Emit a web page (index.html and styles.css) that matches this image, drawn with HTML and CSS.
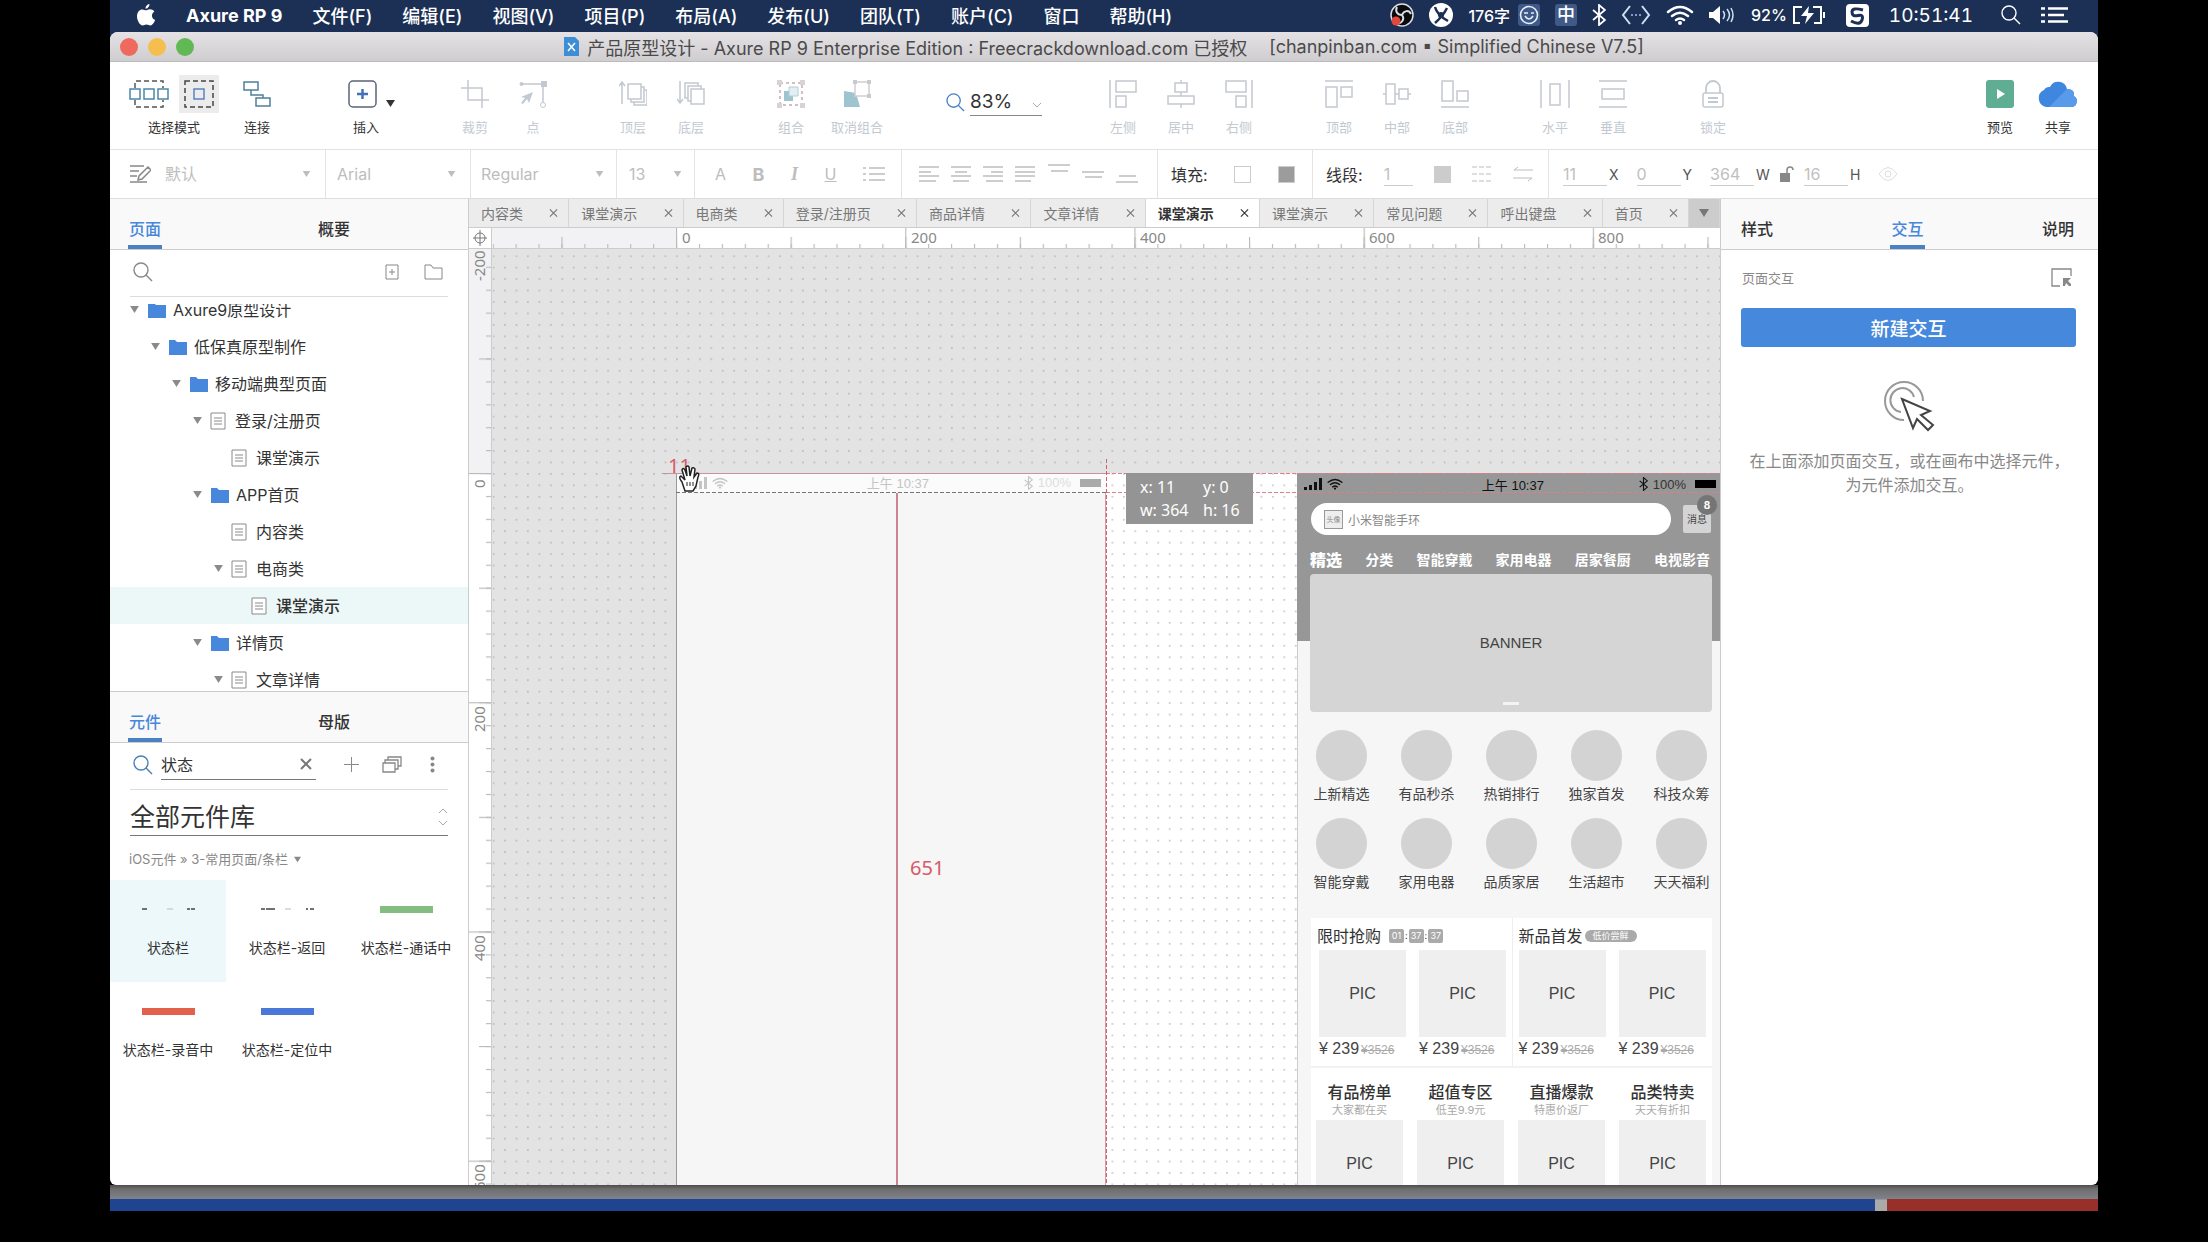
FILE: index.html
```html
<!DOCTYPE html>
<html lang="zh-CN">
<head>
<meta charset="utf-8">
<title>产品原型设计 - Axure RP 9</title>
<link rel="stylesheet" href="styles.css">
</head>
<body>
<svg class="defs" aria-hidden="true">
  <symbol id="i-x" viewBox="0 0 10 10"><path d="M1 1l8 8M9 1l-8 8" fill="none" stroke="currentColor" stroke-width="1.3"/></symbol>
  <symbol id="i-down" viewBox="0 0 10 8"><path d="M0 0h10L5 8z" fill="currentColor"/></symbol>
  <symbol id="i-search" viewBox="0 0 20 20"><g fill="none" stroke="currentColor" stroke-width="1.4"><circle cx="8" cy="8" r="7"/><path d="M13 13l6 6"/></g></symbol>
  <symbol id="i-folder" viewBox="0 0 20 16"><path d="M1 1h6l2 2h10v13H1z" fill="#4787dc"/></symbol>
  <symbol id="i-page" viewBox="0 0 16 18"><path d="M1 1h14v16H1z" fill="#fff" stroke="#8a8a8a"/><path d="M4 6h8M4 9h8M4 12h8" stroke="#8a8a8a" fill="none"/></symbol>
  <symbol id="i-signal" viewBox="0 0 18 12"><path d="M0 9h3v3H0zM5 7h3v5H5zM10 4h3v8h-3zM15 0h3v12h-3z" fill="currentColor"/></symbol>
  <symbol id="i-wifi" viewBox="0 0 28 20"><g fill="none" stroke="currentColor" stroke-width="2.4" stroke-linecap="round"><path d="M2 7q12-10 24 0M6 11q8-6.500 16 0M10 15q4-3 8 0"/></g><circle cx="14" cy="18" r="2" fill="currentColor"/></symbol>
  <symbol id="i-bt" viewBox="0 0 14 22"><path d="M1 6l12 10-6 5V1l6 5L1 16" fill="none" stroke="currentColor" stroke-width="1.8"/></symbol>
</svg>

<div class="screen">
  <header class="menubar">
    <nav class="menus">
      <button class="apple" aria-label="Apple"><svg width="20" height="22" viewBox="0 0 20 22"><path d="M13.500 0c.2 2-1.600 4.600-3.900 4.700C9.300 2.600 11.300.3 13.500 0zM10 6.300c1 0 2.200-1.100 4-1.100 1.600 0 3.300.8 4.400 2.400-3.600 2.100-3 7.100.7 8.500-.9 2.500-2.700 5.400-4.700 5.400-1.500 0-2-.9-3.900-.9s-2.500.9-3.900.9C3.900 21.500 1 16.600 1 12.300c0-4.400 2.700-6.900 5.300-6.900 1.700 0 2.700.9 3.700.9z" fill="#fff"/></svg></button>
      <button class="app">Axure RP 9</button>
      <button>文件(F)</button><button>编辑(E)</button><button>视图(V)</button><button>项目(P)</button><button>布局(A)</button><button>发布(U)</button><button>团队(T)</button><button>账户(C)</button><button>窗口</button><button>帮助(H)</button>
    </nav>
    <div class="status">
      <svg width="24" height="26" viewBox="0 0 24 24"><circle cx="12" cy="12" r="11" fill="#0b0b0d" stroke="#d9dde6" stroke-width="1.500"/><path d="M12 12C7 12 5 8 7 4M12 12c2-5 7-5 9-1M12 12c3 4 0 8-4 9" fill="none" stroke="#d9dde6" stroke-width="2"/><circle cx="6" cy="18" r="4.500" fill="#e2483c"/></svg>
      <svg width="24" height="24" viewBox="0 0 24 24"><circle cx="12" cy="12" r="12" fill="#fff"/><path d="M6 4q2 8 13 14M18 5q-4 8-12 15" fill="none" stroke="#1c3056" stroke-width="2.500"/><circle cx="12" cy="12" r="3" fill="#1c3056"/></svg>
      <span class="pair"><span class="s16">176字</span><svg class="ime" width="22" height="22" viewBox="0 0 22 22"><g fill="none" stroke="#e6eefa" stroke-width="1.600"><circle cx="11" cy="11" r="8.500"/><path d="M7 12q4 6 8 0M6 9h4M13 9h3"/></g></svg></span>
      <span class="ime zh">中</span>
      <svg width="14" height="22"><use href="#i-bt"/></svg>
      <svg width="30" height="22" viewBox="0 0 30 22"><path d="M9 2L2 11l7 9M21 2l7 9-7 9" fill="none" stroke="#cfe0f5" stroke-width="2"/><path d="M10 11h10" stroke="#7f9cc4" stroke-width="2" stroke-dasharray="2 2"/></svg>
      <svg width="28" height="20"><use href="#i-wifi"/></svg>
      <svg width="25" height="18" viewBox="0 0 25 18"><path d="M0 6h4l7-6v18l-7-6H0z" fill="#fff"/><path d="M14 5q3 4 0 8M18 3q5 6 0 12M22 2q4 7 0 14" fill="none" stroke="#cfe0f5" stroke-width="1.500"/></svg>
      <div class="clockside">
        <span class="pair tight"><span class="s16">92%</span><svg width="34" height="18" viewBox="0 0 34 18"><path d="M10 1H2v16h6M21 1h8v16h-7M32 6v6" fill="none" stroke="#fff" stroke-width="2"/><path d="M17 0l-8 10h6l-2 8 9-11h-6z" fill="#fff"/></svg></span>
        <svg width="23" height="23" viewBox="0 0 23 23"><rect width="23" height="23" rx="4" fill="#fff"/><path d="M17 6Q6 3 6 8t6 3.500 4 4.500-11 1" fill="none" stroke="#1c3056" stroke-width="3"/></svg>
        <time>10:51:41</time>
        <svg class="spot" width="20" height="20"><use href="#i-search"/></svg>
        <svg width="27" height="16" viewBox="0 0 27 16"><path d="M0 1.500h4M7 1.500h20M0 8h4M7 8h16M0 14.500h4M7 14.500h20" stroke="#fff" stroke-width="2.500"/></svg>
      </div>
    </div>
  </header>

  <main class="window">
    <div class="titlebar">
      <div class="lights"><i class="red"></i><i class="yellow"></i><i class="green"></i></div>
      <svg width="15" height="19" viewBox="0 0 15 19"><path d="M0 0h11l4 4v15H0z" fill="#3e8ed6"/><path d="M4 6l7 8M11 6l-7 8" stroke="#fff" stroke-width="1.500"/></svg>
      <span>产品原型设计 - Axure RP 9 Enterprise Edition : Freecrackdownload.com 已授权</span>
      <span class="edition">[chanpinban.com ▪ Simplified Chinese V7.5]</span>
    </div>

    <div class="toolbar">
      <div class="group lead">
        <button class="tool wide"><span class="icons"><svg width="40" height="28" viewBox="0 0 40 28"><path d="M6 8V1h28v7M6 20v7h28v-7" fill="none" stroke="#555" stroke-width="1.500" stroke-dasharray="5 3"/><g fill="#fff" stroke="#4a86a8" stroke-width="1.500"><path d="M1 9h10v10H1zM15 9h10v10H15zM29 9h10v10H29z"/></g></svg><span class="picked"><svg width="30" height="28" viewBox="0 0 30 28"><path d="M1 1h28v26H1z" fill="none" stroke="#444" stroke-width="1.500" stroke-dasharray="5 3"/><path d="M10 9h10v10H10z" fill="none" stroke="#5b84c4" stroke-width="1.500"/></svg></span></span>选择模式</button>
        <button class="tool"><span class="icons"><svg width="28" height="28" viewBox="0 0 28 28"><path d="M1 2h14v8H1zM13 18h14v8H13zM8 10v5h12v3" fill="none" stroke="#4f7f9c" stroke-width="1.500"/></svg></span>连接</button>
      </div>
      <div class="group">
        <button class="tool insert"><span class="icons"><svg width="48" height="28" viewBox="0 0 48 28"><rect x="1" y="1" width="27" height="26" rx="4" fill="none" stroke="#5a6478" stroke-width="1.500"/><path d="M14.500 9v10M9 14h11" stroke="#4470b8" stroke-width="2.500"/><path d="M38 20h9l-4.500 7z" fill="#333"/></svg></span>插入</button>
      </div>
      <div class="group">
        <button class="tool off"><span class="icons"><svg width="28" height="28" viewBox="0 0 28 28"><path d="M0 8h21v20M7 0v20h21" fill="none" stroke="currentColor" stroke-width="1.500"/></svg></span>裁剪</button>
        <button class="tool off"><span class="icons"><svg width="28" height="28" viewBox="0 0 28 28"><path d="M2 4h22v20" fill="none" stroke="currentColor" stroke-width="1.500"/><circle cx="2.500" cy="4" r="2" fill="currentColor"/><path d="M22 1h6v6h-6z" fill="currentColor"/><circle cx="24" cy="25" r="2.500" fill="#fff" stroke="currentColor"/><path d="M14 12L2 17l4 1-4 5 2 1 4-5 2 4z" fill="currentColor"/></svg></span>点</button>
      </div>
      <div class="group">
        <button class="tool off"><span class="icons"><svg width="28" height="28" viewBox="0 0 28 28"><path d="M3 24V3M0 6l3-4 3 4M9 4h13v15H9zM22 7h3v15H12v-3M25 10h3v15H15v-3" fill="none" stroke="currentColor" stroke-width="1.500"/></svg></span>顶层</button>
        <button class="tool off"><span class="icons"><svg width="28" height="28" viewBox="0 0 28 28"><path d="M3 1v21M0 19l3 4 3-4M14 9h13v15H14zM14 21h-3V6h13v3M11 18H8V3h13v3" fill="none" stroke="currentColor" stroke-width="1.500"/></svg></span>底层</button>
      </div>
      <div class="group">
        <button class="tool off"><span class="icons"><svg width="28" height="28" viewBox="0 0 28 28"><path d="M3 3h22v22H3z" fill="none" stroke="#c5a9b4" stroke-width="1.500" stroke-dasharray="3 3"/><path d="M0 0h5v5H0zM23 0h5v5h-5zM0 23h5v5H0zM23 23h5v5h-5z" fill="#d6d3d8"/><path d="M7 11h9v10H7z" fill="#9ec4d0"/><path d="M12 7h9v9h-9z" fill="#e3eff3" stroke="#b5cdd6"/></svg></span>组合</button>
        <button class="tool off ungroup"><span class="icons"><svg width="28" height="28" viewBox="0 0 28 28"><path d="M1 11l12 2 4 14H1z" fill="#9ec4d0"/><path d="M12 2h14v14H12z" fill="#fff" stroke="#cfcfd4" stroke-width="1.500"/><path d="M10 0h4v4h-4zM24 0h4v4h-4zM24 14h4v4h-4z" fill="#c9c9ce"/></svg></span>取消组合</button>
      </div>
      <label class="zoom"><svg width="19" height="19"><use href="#i-search"/></svg><select aria-label="缩放"><option>83%</option></select><svg class="chev" width="10" height="6" viewBox="0 0 10 6"><path d="M1 1l4 4 4-4" fill="none" stroke="#aaa"/></svg></label>
      <div class="group">
        <button class="tool off"><span class="icons"><svg width="28" height="28" viewBox="0 0 28 28"><path d="M1 0v28M7 1h20v11H7zM7 16h10v11H7z" fill="none" stroke="currentColor" stroke-width="1.500"/></svg></span>左侧</button>
        <button class="tool off"><span class="icons"><svg width="28" height="28" viewBox="0 0 28 28"><path d="M14 0v3M8 3h12v9H8zM14 12v4M1 16h26v8H1zM14 24v4" fill="none" stroke="currentColor" stroke-width="1.500"/></svg></span>居中</button>
        <button class="tool off"><span class="icons"><svg width="28" height="28" viewBox="0 0 28 28"><path d="M27 0v28M1 1h20v11H1zM11 16h10v11H11z" fill="none" stroke="currentColor" stroke-width="1.500"/></svg></span>右侧</button>
      </div>
      <div class="group">
        <button class="tool off"><span class="icons"><svg width="28" height="28" viewBox="0 0 28 28"><path d="M0 1h28M1 7h11v20H1zM16 7h11v10H16z" fill="none" stroke="currentColor" stroke-width="1.500"/></svg></span>顶部</button>
        <button class="tool off"><span class="icons"><svg width="28" height="28" viewBox="0 0 28 28"><path d="M0 14h3M3 4h9v20H3zM12 14h4M16 9h9v10h-9zM25 14h3" fill="none" stroke="currentColor" stroke-width="1.500"/></svg></span>中部</button>
        <button class="tool off"><span class="icons"><svg width="28" height="28" viewBox="0 0 28 28"><path d="M0 27h28M1 1h11v20H1zM16 11h11v10H16z" fill="none" stroke="currentColor" stroke-width="1.500"/></svg></span>底部</button>
      </div>
      <div class="group">
        <button class="tool off"><span class="icons"><svg width="30" height="28" viewBox="0 0 30 28"><path d="M1 0v28M29 0v28M10 4h10v21H10z" fill="none" stroke="currentColor" stroke-width="1.500"/></svg></span>水平</button>
        <button class="tool off"><span class="icons"><svg width="28" height="28" viewBox="0 0 28 28"><path d="M0 1h28M0 27h28M3 9h22v10H3z" fill="none" stroke="currentColor" stroke-width="1.500"/></svg></span>垂直</button>
      </div>
      <div class="group">
        <button class="tool off"><span class="icons"><svg width="24" height="28" viewBox="0 0 24 28"><path d="M5 13V8a7 7 0 0 1 14 0v5M7 18h10M7 22h10" fill="none" stroke="currentColor" stroke-width="1.800"/><rect x="2" y="13" width="20" height="14" rx="2" fill="none" stroke="currentColor" stroke-width="1.500"/></svg></span>锁定</button>
      </div>
      <div class="group end">
        <button class="tool"><span class="icons"><svg width="28" height="28" viewBox="0 0 28 28"><rect width="28" height="28" rx="3" fill="#5fae93"/><path d="M11 9l8 5-8 5z" fill="#fff"/></svg></span>预览</button>
        <button class="tool"><span class="icons"><svg width="42" height="28" viewBox="0 0 42 28"><path d="M9 27a9 9 0 0 1-2-17 6 6 0 0 1 6-3 9 9 0 0 1 17 2q8 0 7 7a6 6 0 0 1-2 11z" fill="#3f86de"/><path d="M12 27L30 9q8 0 7 7a6 6 0 0 1-2 11z" fill="#5a9aea"/></svg></span>共享</button>
      </div>
    </div>

    <div class="format">
      <div class="cell f-style"><svg width="21" height="18" viewBox="0 0 21 18"><path d="M0 1h14M0 6h9M0 11h7M0 17h17M18 2l3 3-9 9-4 1 1-4z" fill="none" stroke="#888" stroke-width="1.500"/></svg><select aria-label="样式"><option>默认</option></select><svg width="9" height="6"><use href="#i-down"/></svg></div>
      <div class="cell f-font"><select aria-label="字体"><option>Arial</option></select><svg width="9" height="6"><use href="#i-down"/></svg></div>
      <div class="cell f-weight"><select aria-label="字重"><option>Regular</option></select><svg width="9" height="6"><use href="#i-down"/></svg></div>
      <div class="cell f-size"><select aria-label="字号"><option>13</option></select><svg width="9" height="6"><use href="#i-down"/></svg></div>
      <div class="cell f-text"><button aria-label="颜色">A</button><button class="b">B</button><button class="it">I</button><button class="un">U</button><button aria-label="列表"><svg width="22" height="16" viewBox="0 0 22 16"><path d="M0 2h3M6 2h16M0 8h3M6 8h16M0 14h3M6 14h16" stroke="currentColor" stroke-width="1.500"/></svg></button></div>
      <div class="cell f-align">
        <button aria-label="左对齐"><svg width="20" height="16" viewBox="0 0 20 16"><path d="M0 1h20M0 6h12M0 10h20M0 15h17" stroke="currentColor" stroke-width="1.500"/></svg></button>
        <button aria-label="居中"><svg width="20" height="16" viewBox="0 0 20 16"><path d="M0 1h20M4 6h12M0 10h20M2 15h16" stroke="currentColor" stroke-width="1.500"/></svg></button>
        <button aria-label="右对齐"><svg width="20" height="16" viewBox="0 0 20 16"><path d="M0 1h20M8 6h12M0 10h20M3 15h17" stroke="currentColor" stroke-width="1.500"/></svg></button>
        <button aria-label="两端对齐"><svg width="20" height="16" viewBox="0 0 20 16"><path d="M0 1h20M0 6h20M0 10h20M0 15h16" stroke="currentColor" stroke-width="1.500"/></svg></button>
        <button aria-label="顶部"><svg width="22" height="20" viewBox="0 0 22 20"><path d="M0 1h22M3 7h17" stroke="currentColor" stroke-width="1.500"/></svg></button>
        <button aria-label="中部"><svg width="22" height="20" viewBox="0 0 22 20"><path d="M0 8h22M3 13h17" stroke="currentColor" stroke-width="1.500"/></svg></button>
        <button aria-label="底部"><svg width="22" height="20" viewBox="0 0 22 20"><path d="M3 12h17M0 18h22" stroke="currentColor" stroke-width="1.500"/></svg></button>
      </div>
      <div class="cell f-fill"><span>填充:</span><button class="sw" aria-label="填充颜色"></button><button class="sw solid" aria-label="阴影"></button></div>
      <div class="cell f-line"><label for="lw">线段:</label><input id="lw" class="n" value="1"><button class="sw grey" aria-label="线条颜色"></button><button aria-label="线型"><svg width="20" height="16" viewBox="0 0 20 16"><path d="M0 1h20M0 8h20M0 15h20" stroke="currentColor" stroke-dasharray="5 2"/></svg></button><button aria-label="箭头"><svg width="20" height="16" viewBox="0 0 20 16"><path d="M20 4H1l4-3M0 12h19l-4 3" fill="none" stroke="currentColor"/></svg></button></div>
      <div class="cell f-pos"><label><input value="11">X</label><label><input value="0">Y</label><label><input value="364">W</label><svg width="14" height="16" viewBox="0 0 14 16"><path d="M0 7h10v9H0z" fill="#888"/><path d="M7 7V4q0-3 3-3t3 3" fill="none" stroke="#888" stroke-width="1.500"/></svg><label><input value="16">H</label><svg width="20" height="14" viewBox="0 0 20 14"><path d="M1 7q9-13 18 0-9 13-18 0z" fill="none" stroke="#ddd"/><circle cx="10" cy="7" r="3" fill="none" stroke="#ddd"/></svg></div>
    </div>

    <div class="body">
      <aside class="left">
        <div class="tabs"><button class="on">页面</button><button class="second">概要</button></div>
        <div class="find"><svg width="20" height="20"><use href="#i-search"/></svg><button class="push" aria-label="添加页面"><svg width="14" height="16" viewBox="0 0 14 16"><path d="M1 1h12v14H1zM7 5v6M4 8h6" fill="none" stroke="#888"/></svg></button><button aria-label="添加文件夹"><svg width="19" height="16" viewBox="0 0 19 16"><path d="M1 1h6l2 3h9v11H1z" fill="none" stroke="#888"/></svg></button></div>
        <div class="tree"><ul>
          <li class="d0"><svg class="tw" width="9" height="7"><use href="#i-down"/></svg><svg width="20" height="16"><use href="#i-folder"/></svg><span>Axure9原型设计</span></li>
          <li class="d1"><svg class="tw" width="9" height="7"><use href="#i-down"/></svg><svg width="20" height="16"><use href="#i-folder"/></svg><span>低保真原型制作</span></li>
          <li class="d2"><svg class="tw" width="9" height="7"><use href="#i-down"/></svg><svg width="20" height="16"><use href="#i-folder"/></svg><span>移动端典型页面</span></li>
          <li class="d3"><svg class="tw" width="9" height="7"><use href="#i-down"/></svg><svg class="pg" width="16" height="18"><use href="#i-page"/></svg><span>登录/注册页</span></li>
          <li class="d4"><i class="tw"></i><svg class="pg" width="16" height="18"><use href="#i-page"/></svg><span>课堂演示</span></li>
          <li class="d3"><svg class="tw" width="9" height="7"><use href="#i-down"/></svg><svg width="20" height="16"><use href="#i-folder"/></svg><span>APP首页</span></li>
          <li class="d4"><i class="tw"></i><svg class="pg" width="16" height="18"><use href="#i-page"/></svg><span>内容类</span></li>
          <li class="d4"><svg class="tw" width="9" height="7"><use href="#i-down"/></svg><svg class="pg" width="16" height="18"><use href="#i-page"/></svg><span>电商类</span></li>
          <li class="d5 sel"><i class="tw"></i><svg class="pg" width="16" height="18"><use href="#i-page"/></svg><span>课堂演示</span></li>
          <li class="d3"><svg class="tw" width="9" height="7"><use href="#i-down"/></svg><svg width="20" height="16"><use href="#i-folder"/></svg><span>详情页</span></li>
          <li class="d4"><svg class="tw" width="9" height="7"><use href="#i-down"/></svg><svg class="pg" width="16" height="18"><use href="#i-page"/></svg><span>文章详情</span></li>
        </ul></div>
        <div class="tabs lower"><button class="on">元件</button><button class="second">母版</button></div>
        <div class="find libfind"><svg class="blue" width="20" height="20"><use href="#i-search"/></svg><label class="term"><input aria-label="搜索元件" value="状态"><svg width="12" height="12" viewBox="0 0 12 12"><path d="M1 1l10 10M11 1L1 11" stroke="#777" stroke-width="2"/></svg></label><svg class="plus" width="15" height="15" viewBox="0 0 15 15"><path d="M7.500 0v15M0 7.500h15" stroke="#888"/></svg><svg width="20" height="17" viewBox="0 0 20 17"><path d="M1 7h12v9H1zM3 7V4h13v9h-3M6 4V1h13v9h-3" fill="none" stroke="#888" stroke-width="1.300"/></svg><svg class="dots" width="5" height="17" viewBox="0 0 5 17"><g fill="#888"><circle cx="2.500" cy="2.500" r="2"/><circle cx="2.500" cy="8.500" r="2"/><circle cx="2.500" cy="14.500" r="2"/></g></svg></div>
        <label class="lib"><select aria-label="元件库"><option>全部元件库</option></select><svg width="10" height="18" viewBox="0 0 10 18"><path d="M1 5l4-4 4 4M1 13l4 4 4-4" fill="none" stroke="#aaa"/></svg></label>
        <div class="crumb">iOS元件 » 3-常用页面/条栏 <svg width="7" height="7"><use href="#i-down"/></svg></div>
        <div class="widgets">
          <button class="w on"><svg width="53" height="6" viewBox="0 0 53 6"><path d="M0 3h5M45 3h3M49 3h4" stroke="#444" stroke-width="1.500"/><path d="M25 3h6" stroke="#bbb"/></svg>状态栏</button>
          <button class="w"><svg width="53" height="6" viewBox="0 0 53 6"><path d="M0 3h4M5 3h9M45 3h2M49 3h4" stroke="#444" stroke-width="1.500"/><path d="M24 3h6" stroke="#bbb"/></svg>状态栏-返回</button>
          <button class="w"><i class="bar g"></i>状态栏-通话中</button>
          <button class="w"><i class="bar r"></i>状态栏-录音中</button>
          <button class="w"><i class="bar u"></i>状态栏-定位中</button>
        </div>
      </aside>

      <section class="center">
        <div class="doctabs">
          <button>内容类<svg width="9" height="10"><use href="#i-x"/></svg></button><button>课堂演示<svg width="9" height="10"><use href="#i-x"/></svg></button><button>电商类<svg width="9" height="10"><use href="#i-x"/></svg></button><button>登录/注册页<svg width="9" height="10"><use href="#i-x"/></svg></button><button>商品详情<svg width="9" height="10"><use href="#i-x"/></svg></button><button>文章详情<svg width="9" height="10"><use href="#i-x"/></svg></button><button class="on">课堂演示<svg width="9" height="10"><use href="#i-x"/></svg></button><button>课堂演示<svg width="9" height="10"><use href="#i-x"/></svg></button><button>常见问题<svg width="9" height="10"><use href="#i-x"/></svg></button><button>呼出键盘<svg width="9" height="10"><use href="#i-x"/></svg></button><button>首页<svg width="9" height="10"><use href="#i-x"/></svg></button><button class="more" aria-label="更多"><svg width="10" height="8"><use href="#i-down"/></svg></button>
        </div>
        <div class="work">
          <div class="corner"><svg width="14" height="16" viewBox="0 0 14 16"><circle cx="7" cy="8" r="5" fill="none" stroke="#777"/><path d="M7 0v16M0 8h14" stroke="#777"/></svg></div>
          <svg class="hr" aria-hidden="true">
            <defs>
              <pattern id="h20" width="20" height="21" patternUnits="userSpaceOnUse"><path d="M.5 16v5" stroke="#bbb"/></pattern>
              <pattern id="h100" width="100" height="21" patternUnits="userSpaceOnUse"><path d="M.5 9v12" stroke="#bbb"/></pattern>
              <pattern id="h200" width="200" height="21" patternUnits="userSpaceOnUse"><path d="M.5 0v21" stroke="#bbb"/></pattern>
            </defs>
            <rect width="184" height="21" fill="#f2f2f4"/>
            <g transform="translate(184 0) scale(1.146 1)"><rect x="-160" width="1600" height="21" fill="url(#h20)"/><rect x="-160" width="1600" height="21" fill="url(#h100)"/><rect x="-160" width="1600" height="21" fill="url(#h200)"/></g>
            <g class="rt"><text x="190" y="15">0</text><text x="419" y="15">200</text><text x="648" y="15">400</text><text x="877" y="15">600</text><text x="1106" y="15">800</text></g>
          </svg>
          <svg class="vr" aria-hidden="true">
            <defs>
              <pattern id="v20" width="22" height="20" patternUnits="userSpaceOnUse"><path d="M17 .5h6" stroke="#bbb"/></pattern>
              <pattern id="v100" width="22" height="100" patternUnits="userSpaceOnUse"><path d="M10 .5h12" stroke="#bbb"/></pattern>
              <pattern id="v200" width="22" height="200" patternUnits="userSpaceOnUse"><path d="M0 .5h22" stroke="#bbb"/></pattern>
            </defs>
            <rect width="22" height="224" fill="#f2f2f4"/>
            <g transform="translate(0 224) scale(1 1.146)"><rect y="-195" width="22" height="1600" fill="url(#v20)"/><rect y="-195" width="22" height="1600" fill="url(#v100)"/><rect y="-195" width="22" height="1600" fill="url(#v200)"/></g>
            <g class="rt"><text transform="translate(16 32) rotate(-90)">-200</text><text transform="translate(16 239) rotate(-90)">0</text><text transform="translate(16 483) rotate(-90)">200</text><text transform="translate(16 712) rotate(-90)">400</text><text transform="translate(16 941) rotate(-90)">600</text></g>
          </svg>
          <div class="canvas">
            <svg class="grid" aria-hidden="true">
              <defs>
                <pattern id="dg" width="10" height="10" patternUnits="userSpaceOnUse"><rect x="0" y="0" width="1.500" height="1.500" fill="#bcbcbc"/></pattern>
                <pattern id="dw" width="10" height="10" patternUnits="userSpaceOnUse"><rect x="0" y="0" width="1.500" height="1.500" fill="#d3c4c9"/></pattern>
              </defs>
              <rect width="100%" height="100%" fill="#e3e3e3"/>
              <g transform="translate(184 224) scale(1.146)"><rect x="-160" y="-190" width="1300" height="1100" fill="url(#dg)"/><rect width="1300" height="1100" fill="#fff"/><rect width="1300" height="1100" fill="url(#dw)"/></g>
            </svg>
            <div class="draft"><div class="ghost"><svg width="18" height="12"><use href="#i-signal"/></svg><svg width="16" height="12"><use href="#i-wifi"/></svg><span class="clock">上午 10:37</span><svg width="9" height="14"><use href="#i-bt"/></svg><span class="pct">100%</span><i class="batt"></i></div></div>
            <div class="phone">
              <div class="head">
                <div class="ios"><svg width="18" height="12"><use href="#i-signal"/></svg><svg width="16" height="12"><use href="#i-wifi"/></svg><span class="clock">上午 10:37</span><svg width="9" height="14"><use href="#i-bt"/></svg><span class="pct">100%</span><i class="batt"></i></div>
                <div class="search"><span class="pill"><span class="thumb">头像</span>小米智能手环</span><span class="msg">消息<b>8</b></span></div>
                <div class="cats"><b>精选</b><span>分类</span><span>智能穿戴</span><span>家用电器</span><span>居家餐厨</span><span>电视影音</span></div>
              </div>
              <div class="banner">BANNER</div>
              <div class="entries"><div><i></i>上新精选</div><div><i></i>有品秒杀</div><div><i></i>热销排行</div><div><i></i>独家首发</div><div><i></i>科技众筹</div><div><i></i>智能穿戴</div><div><i></i>家用电器</div><div><i></i>品质家居</div><div><i></i>生活超市</div><div><i></i>天天福利</div></div>
              <div class="deals">
                <div class="half"><h3>限时抢购 <span class="timer"><i>01</i>:<i>37</i>:<i>37</i></span></h3><div class="pics"><div><p>PIC</p>¥ 239<s>¥3526</s></div><div><p>PIC</p>¥ 239<s>¥3526</s></div></div></div>
                <div class="half"><h3>新品首发<span class="tag">低价尝鲜</span></h3><div class="pics"><div><p>PIC</p>¥ 239<s>¥3526</s></div><div><p>PIC</p>¥ 239<s>¥3526</s></div></div></div>
              </div>
              <div class="lists"><div><h3>有品榜单</h3><small>大家都在买</small><p>PIC</p></div><div><h3>超值专区</h3><small>低至9.9元</small><p>PIC</p></div><div><h3>直播爆款</h3><small>特惠价返厂</small><p>PIC</p></div><div><h3>品类特卖</h3><small>天天有折扣</small><p>PIC</p></div></div>
            </div>
            <svg class="guides" aria-hidden="true"><g fill="none"><path d="M170 224.500h444" stroke="#c9929c"/><path d="M614 224.500h614M614 243.500h614" stroke="#d9808c" stroke-dasharray="4 2"/><path d="M184 243.500h430" stroke="#777" stroke-dasharray="4 2"/><path d="M405 244v1100" stroke="#cc8590" stroke-width="2"/><path d="M613.500 244v1100" stroke="#dc9aa4"/><path d="M614.500 210v1100" stroke="#cf6070" stroke-dasharray="4 2"/></g>
              <g class="meas"><text x="176" y="224">11</text><text x="418" y="626">651</text></g>
              <path d="M190 233q-4-5-1-6l4 4-3-10q1-3 3 0l2 6-1-9q2-2 3 0l1 9 2-8q2-1 3 1l-1 8 3-4q3 0 1 4l-2 9-3 5h-8z" fill="#fff" stroke="#222" stroke-width="1.500"/><path d="M195 233v4M198 233v4M201 233v4" stroke="#222"/></svg>
            <div class="tip"><span>x: 11</span><span>y: 0</span><span>w: 364</span><span>h: 16</span></div>
          </div>
        </div>
      </section>

      <aside class="right">
        <div class="tabs"><button>样式</button><button class="on">交互</button><button>说明</button></div>
        <div class="scope"><span>页面交互</span><svg width="21" height="19" viewBox="0 0 21 19"><path d="M9 18H1V1h19v7" fill="none" stroke="#888" stroke-width="1.300"/><path d="M12 10h8l-3 3 3 3v2h-2l-3-3-1 3h-2z" fill="#888"/></svg></div>
        <button class="create">新建交互</button>
        <svg class="click" width="52" height="52" viewBox="0 0 52 52"><g fill="none" stroke="#999" stroke-width="2"><path d="M20 39A19 19 0 1 1 39 20"/><path d="M17 31a12 12 0 1 1 13-15"/></g><path d="M18 18l28 12-9 4 12 10-5 5-11-11-4 9z" fill="#fff" stroke="#444" stroke-width="2"/></svg>
        <p>在上面添加页面交互，或在画布中选择元件，<br>为元件添加交互。</p>
      </aside>
    </div>
  </main>
  <footer class="under"><i class="b"></i><i class="r"></i></footer>
</div>
</body>
</html>
```
FILE: styles.css
```css
* { box-sizing: border-box; }
html, body { margin: 0; height: 100%; background: #000; }
body { font-family: Inter, "Noto Sans CJK SC", sans-serif; color: #333; overflow: hidden; }
button { border: 0; background: none; padding: 0; margin: 0; font: inherit; color: inherit; }
input, select { border: 0; background: none; padding: 0; margin: 0; font: inherit; color: inherit; min-width: 0; appearance: none; outline: 0; border-radius: 0; }
svg { flex: none; display: block; }
i { font-style: normal; }
.defs { position: absolute; width: 0; height: 0; }

.screen { margin: 0 110px; height: 100vh; padding-bottom: 31px; display: flex; flex-direction: column; background: linear-gradient(#1c3056 50px, #000 50px); }

/* system menu bar */
.menubar { height: 32px; flex: none; display: flex; justify-content: space-between; align-items: center; padding-bottom: 2px; background: #1c3056; color: #fff; font-size: 18px; font-weight: 500; white-space: nowrap; }
.menus { display: flex; gap: 30px; padding-left: 26px; align-items: center; }
.menus .app { font-weight: 700; }
.status, .clockside { display: flex; align-items: center; }
.status { gap: 15px; padding-right: 30px; }
.clockside { gap: 20px; margin-left: 2px; }
.pair { display: flex; align-items: center; gap: 8px; }
.pair.tight { gap: 5px; }
.s16 { font-size: 16px; }
.ime { background: #3f5a86; border-radius: 3px; }
.zh { width: 22px; line-height: 22px; text-align: center; }
.status time { font-weight: 400; font-size: 19px; font-variant-numeric: tabular-nums; }
.spot { margin-left: 8px; }

/* window frame */
.window { flex: 1; min-height: 0; display: flex; flex-direction: column; background: #fff; border-radius: 8px 8px 6px 6px; overflow: hidden; }
.titlebar { height: 30px; flex: none; position: relative; display: flex; justify-content: center; align-items: center; gap: 8px; background: linear-gradient(#e4e2e4, #cfcdcf); border-bottom: 1px solid #bbb; color: #4a4a4a; font-size: 18px; white-space: nowrap; }
.edition { padding-left: 14px; }
.lights { position: absolute; left: 10px; display: flex; gap: 10px; }
.lights i { width: 18px; height: 18px; border-radius: 50%; }
.lights .red { background: #ee6a5f; }
.lights .yellow { background: #f5bf4f; }
.lights .green { background: #61b955; }

/* main toolbar */
.toolbar { height: 88px; flex: none; display: flex; align-items: flex-start; padding: 13px 11px 0 14px; gap: 42px; border-bottom: 1px solid #e2e2e2; }
.group { display: flex; }
.group.lead { gap: 4px; }
.group.end { margin-left: auto; }
.tool { width: 58px; display: flex; flex-direction: column; align-items: center; gap: 4px; font-size: 13px; line-height: 20px; white-space: nowrap; }
.tool.wide { width: 100px; }
.tool.insert { width: 76px; }
.tool.insert .icons { padding-left: 12px; }
.tool.ungroup { width: 74px; }
.tool.off { color: #c3c9d0; }
.icons { height: 38px; display: flex; align-items: center; gap: 10px; }
.picked { width: 40px; height: 38px; display: grid; place-items: center; background: #ececec; }
.zoom { margin: 13px 10px 0; width: 96px; display: flex; align-items: center; gap: 5px; position: relative; color: #4a7fc8; }
.zoom select { flex: 1; height: 28px; font-size: 19px; color: #333; border-bottom: 1px solid #888; }
.zoom .chev { position: absolute; right: 0; top: 14px; }

/* format bar */
.format { height: 49px; flex: none; display: flex; border-bottom: 1px solid #ddd; color: #bdbdbd; font-size: 16px; }
.cell { display: flex; align-items: center; border-right: 1px solid #e4e4e4; }
.cell select { flex: 1; }
.cell button { display: grid; place-items: center; }
.f-style { width: 216px; padding: 0 14px 0 20px; gap: 14px; }
.f-font { width: 145px; padding: 0 14px 0 11px; }
.f-weight { width: 146px; padding: 0 12px 0 10px; }
.f-size { width: 78px; padding: 0 12px; }
.f-text { width: 207px; padding: 0 16px 0 20px; justify-content: space-between; }
.f-text .b { font-weight: 700; font-size: 18px; }
.f-text .it { font-style: italic; font-size: 18px; font-family: "Liberation Serif", serif; font-weight: 700; }
.f-text .un { text-decoration: underline; }
.f-align { width: 256px; padding: 0 19px 0 17px; justify-content: space-between; }
.f-fill { width: 155px; padding: 0 17px 0 13px; justify-content: space-between; color: #333; }
.f-line { width: 236px; padding: 0 15px 0 13px; justify-content: space-between; }
.f-line label { color: #333; }
.f-pos { border: 0; padding-left: 14px; gap: 10px; font-size: 14px; color: #555; }
.f-pos label { display: flex; align-items: center; gap: 2px; margin-right: 8px; }
.f-pos label:nth-of-type(3) { margin-right: 0; }
.f-pos input, .n { width: 44px; height: 24px; font-size: 16px; color: #c0c0c0; border-bottom: 1px solid #ccc; }
.f-line .n { width: 29px; }
.sw { width: 17px; height: 17px; border: 1px solid #ccc; }
.sw.solid { background: #9c9c9c; }
.sw.grey { background: #ccc; }

/* panels */
.body { flex: 1; min-height: 0; display: grid; grid-template-columns: 359px 1fr 378px; }
.tabs { height: 51px; flex: none; display: flex; background: #f9f9f9; border-bottom: 1px solid #ccc; font-size: 16px; font-weight: 500; }
.tabs button { padding: 11px 1px 0; border-bottom: 4px solid transparent; }
.tabs .on { color: #4787dc; border-color: #4a80c4; }
.left { display: flex; flex-direction: column; min-height: 0; border-right: 1px solid #ccc; }
.left .tabs { padding-left: 18px; }
.left .second { margin-left: 155px; }
.find { height: 47px; flex: none; margin: 0 20px; display: flex; align-items: center; gap: 25px; border-bottom: 1px solid #ddd; padding: 0 5px 3px 3px; color: #888; }
.push { margin-left: auto; }
.tree { height: 387px; flex: none; overflow: hidden; margin-top: 7px; }
.tree ul { list-style: none; margin: -13px 0 0; padding: 0; font-size: 16px; }
.tree li { height: 37px; display: flex; align-items: center; }
.tree li span { padding-left: 6px; line-height: 24px; }
.tree .pg { margin-right: 3px; }
.tw { width: 9px; margin-right: 8px; color: #8a8a8a; flex: none; }
.d0 { padding-left: 20px; } .d1 { padding-left: 41px; } .d2 { padding-left: 62px; } .d3 { padding-left: 83px; } .d4 { padding-left: 104px; } .d5 { padding-left: 124px; }
.tree .sel { background: #ecf7f8; font-weight: 500; }
.tabs.lower { border-top: 1px solid #ccc; height: 52px; }
.libfind { padding-right: 0; gap: 23px; }
.blue { color: #4a80b4; }
.term { display: flex; align-items: center; width: 155px; height: 30px; margin-left: -15px; padding-right: 4px; border-bottom: 1px solid #777; color: #666; }
.term input { flex: 1; font-size: 16px; color: #333; }
.plus { margin-left: 5px; }
.dots { margin-left: 5px; }
.lib { margin: 8px 20px 0; height: 38px; flex: none; display: flex; align-items: center; border-bottom: 1px solid #777; }
.lib select { flex: 1; font-size: 25px; line-height: 32px; color: #333; }
.crumb { display: flex; align-items: center; gap: 6px; margin: 11px 19px 9px; line-height: 24px; font-size: 13px; color: #888; }
.widgets { display: grid; grid-template-columns: repeat(3, 119px); }
.w { height: 102px; padding-top: 26px; display: flex; flex-direction: column; align-items: center; gap: 24px; font-size: 14px; line-height: 24px; white-space: nowrap; width: 116px; }
.w.on { background: #ecf8f9; }
.bar { width: 53px; height: 7px; margin-bottom: -1px; flex: none; }
.g { background: #83bd82; } .w .r { background: #e2604c; } .u { background: #4a78d8; }

/* document tabs and rulers */
.center { min-width: 0; min-height: 0; display: flex; flex-direction: column; }
.doctabs { height: 29px; flex: none; display: flex; background: #ececec; font-size: 14px; color: #777; border-bottom: 1px solid #ccc; white-space: nowrap; }
.doctabs button { flex: 1 0 auto; display: flex; align-items: center; justify-content: space-between; gap: 24px; padding: 0 10px 0 12px; border-right: 1px solid #d6d6d6; }
.doctabs .on { background: #fff; color: #333; font-weight: 700; }
.doctabs .more { flex: 0 0 31px; justify-content: center; padding: 0; background: #ccc; }
.work { flex: 1; min-height: 0; display: grid; grid-template: 21px 1fr / 23px 1fr; }
.corner { display: grid; place-items: center; border: solid #ccc; border-width: 0 1px 1px 0; }
.hr { width: 100%; height: 21px; border-bottom: 1px solid #ccc; }
.vr { width: 23px; height: 100%; border-right: 1px solid #ccc; overflow: hidden; }
.rt { font: 15px "Noto Sans", sans-serif; fill: #888; }

/* design canvas */
.canvas { position: relative; overflow: hidden; }
.grid, .guides { position: absolute; left: 0; top: 0; width: 100%; height: 100%; }
.draft { position: absolute; left: 184px; top: 224px; width: 430px; height: 1000px; background: #f6f6f6; border-left: 1px solid #999; }
.ghost, .ios { display: flex; align-items: center; gap: 5px; font: 13px "Liberation Sans", "Noto Sans CJK SC", sans-serif; }
.ghost { height: 19px; background: #fbfbfb; padding: 0 5px 0 12px; color: #c4c4c4; }
.ghost .pct { color: #ddd; }
.clock { flex: 1; text-align: center; padding-left: 44px; font-size: 13px; }
.batt { width: 21px; height: 8px; background: #aaa; margin-left: 4px; }
.phone { position: absolute; left: 805px; top: 224px; width: 430px; height: 1000px; background: #f6f6f6; border: solid #ccc; border-width: 0 1px; font-size: 14px; color: #444; }
.head { height: 168px; background: #979797; margin-left: -1px; }
.ios { height: 22px; color: #333; padding: 0 10px 0 7px; }
.ios > svg, .ios .clock { color: #111; }
.ios .batt { background: #000; }
.search { display: flex; align-items: center; gap: 12px; padding: 8px 15px 0 14px; }
.pill { flex: 1; height: 32px; border-radius: 16px; background: #fff; display: flex; align-items: center; gap: 5px; padding-left: 13px; font-size: 12px; color: #888; }
.thumb { width: 19px; height: 19px; border: 1px solid #999; font-size: 7px; line-height: 17px; text-align: center; background: #eee; }
.msg { position: relative; width: 28px; height: 28px; background: #d4d4d4; border-radius: 2px; font-size: 10px; line-height: 28px; text-align: center; }
.msg b { position: absolute; right: -6px; top: -10px; width: 20px; height: 20px; border-radius: 50%; background: #757575; color: #fff; line-height: 20px; }
.cats { display: flex; justify-content: space-between; align-items: center; padding: 13px 16px 0 13px; color: #fff; font-weight: 700; line-height: 24px; }
.cats b { font-size: 16px; }
.banner { position: relative; height: 138px; margin: -67px 14px 0 12px; padding-bottom: 2px; background: #d5d5d5; border-radius: 4px; display: grid; place-items: center; font: 15px "Liberation Sans", sans-serif; }
.banner::after { content: ""; position: absolute; bottom: 7px; width: 16px; height: 3px; background: #f4f4f4; }
.entries { display: grid; grid-template-columns: repeat(5, 85px); margin: 18px 0 0 1px; }
.entries div { display: flex; flex-direction: column; align-items: center; gap: 2px; height: 88px; line-height: 22px; }
.entries i { width: 51px; height: 51px; border-radius: 50%; background: #d3d3d3; flex: none; }
.deals { display: grid; grid-template-columns: 1fr 1fr; margin: 12px 14px 0 13px; height: 150px; background: #fff; border-bottom: 2px solid #f2f2f2; }
.half + .half { border-left: 1px solid #eee; }
h3 { margin: 0; font-size: 16px; font-weight: 500; line-height: 24px; color: #333; }
.half h3 { display: flex; align-items: center; gap: 8px; padding: 6px 0 2px 6px; font-weight: 400; }
.half .tag { margin-left: -6px; padding: 0 8px; border-radius: 6px; background: #aaa; color: #fff; font-size: 9px; line-height: 12px; }
.timer { display: flex; gap: 1px; font-size: 9px; line-height: 14px; }
.timer i { width: 15px; border-radius: 2px; background: #aaa; color: #fff; text-align: center; }
.pics { display: grid; grid-template-columns: 87px 87px; gap: 13px; padding-left: 8px; font: 16px "Liberation Sans", sans-serif; line-height: 24px; white-space: nowrap; }
.half + .half .pics { padding-left: 6px; }
.pics s { font-size: 12px; color: #aaa; padding-left: 2px; }
.phone p { margin: 0; width: 87px; height: 87px; background: #efefef; display: grid; place-items: center; font: 16px "Liberation Sans", sans-serif; color: #444; }
.lists { display: grid; grid-template-columns: repeat(4, 87px); gap: 14px; margin: 0 14px 0 13px; padding: 13px 0 0 5px; background: #fff; text-align: center; height: 300px; }
.lists small { display: block; font-size: 11px; line-height: 14px; margin-bottom: 3px; color: #aaa; }
.lists h3 { line-height: 22px; }
.meas { font: 20px "Noto Sans", sans-serif; fill: #d65a68; }
.tip { position: absolute; left: 634px; top: 224px; width: 127px; height: 51px; padding: 3px 14px; background: #949494; color: #fff; display: grid; grid-template-columns: 63px 1fr; font: 16px "Noto Sans", sans-serif; line-height: 22px; white-space: nowrap; }

/* interactions panel */
.right { border-left: 1px solid #ccc; display: flex; flex-direction: column; align-items: center; min-width: 0; }
.right .tabs { align-self: stretch; justify-content: space-between; padding: 0 23px 0 19px; }
.scope { align-self: stretch; display: flex; justify-content: space-between; align-items: center; margin: 15px 26px 0 21px; height: 24px; font-size: 13px; color: #888; }
.create { align-self: stretch; margin: 19px 22px 0 20px; height: 39px; border-radius: 3px; background: #4688dc; color: #fff; font-size: 19px; font-weight: 500; }
.click { margin-top: 34px; }
.right p { margin: 16px 0 0; font-size: 16px; line-height: 24px; color: #888; text-align: center; white-space: nowrap; }

/* desktop visible under the window */
.under { height: 26px; flex: none; padding-top: 14px; background: linear-gradient(#4c4c4c, #6e6e6e 4px, #80828a 14px, #aaa 15px); display: flex; gap: 12px; }
.under .b { flex: 1; background: #1f4490; }
.under .r { width: 211px; background: #98302a; }
```
